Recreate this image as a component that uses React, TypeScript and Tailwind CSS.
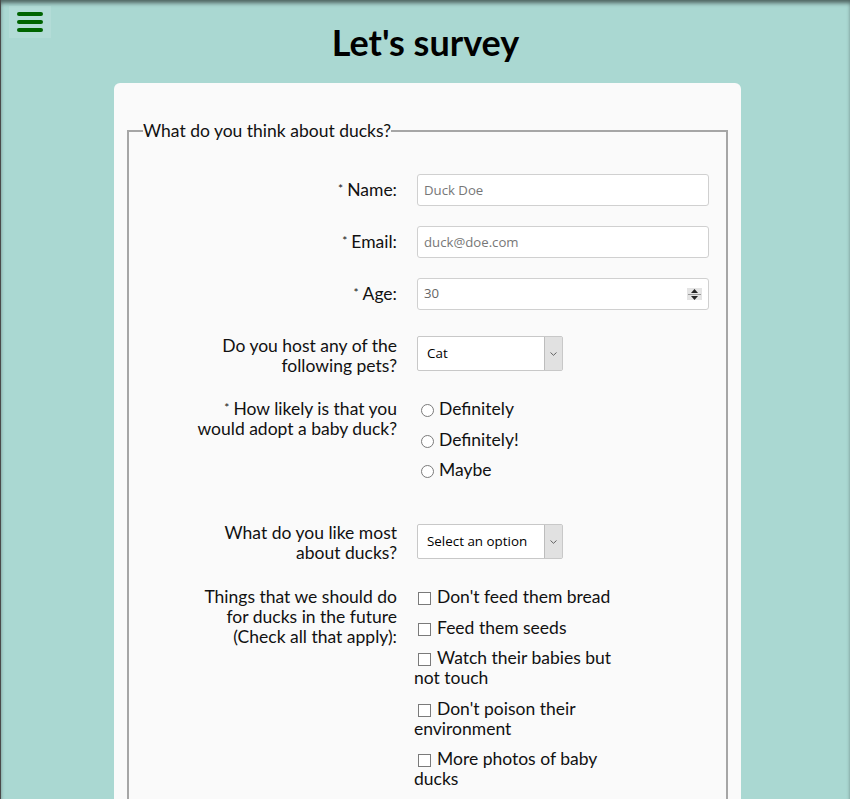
import React from 'react';

const labelFont = "font-['Lato','Open_Sans',sans-serif]";
const inputFont = "font-['Open_Sans','DejaVu_Sans',sans-serif]";

function Req() {
  return <span className="relative -top-[3px] mr-[4px] text-[12px] leading-none">*</span>;
}

function Row({
  label,
  children,
  center = false,
  className = '',
}: {
  label: React.ReactNode;
  children: React.ReactNode;
  center?: boolean;
  className?: string;
}) {
  return (
    <div className={`flex ${center ? 'items-center' : 'items-start'} ${className}`}>
      <div className="w-[254px] shrink-0 text-right leading-5">{label}</div>
      <div className="ml-5">{children}</div>
    </div>
  );
}

function TextInput({ placeholder }: { placeholder: string }) {
  return (
    <input
      type="text"
      placeholder={placeholder}
      className={`h-[32px] w-[292px] rounded-[3px] border border-[#d0d0d0] bg-white px-[6px] text-[13.2px] text-[#333] placeholder:text-[#777] outline-none ${inputFont}`}
    />
  );
}

function NumberInput({ value }: { value: string }) {
  return (
    <div className="flex h-[32px] w-[292px] items-center justify-between rounded-[3px] border border-[#d0d0d0] bg-white pl-[6px] pr-[6px]">
      <span className={`text-[13.2px] text-[#666] ${inputFont}`}>{value}</span>
      <span className="flex h-[12px] w-[15px] flex-col items-center justify-center gap-[1px] bg-[#e4e4e4]">
        <svg width="7" height="4" viewBox="0 0 7 4">
          <path d="M0 4 L3.5 0 L7 4 Z" fill="#222" />
        </svg>
        <span className="h-px w-[13px] bg-[#999]" />
        <svg width="7" height="4" viewBox="0 0 7 4">
          <path d="M0 0 L3.5 4 L7 0 Z" fill="#222" />
        </svg>
      </span>
    </div>
  );
}

function SelectBox({ value }: { value: string }) {
  return (
    <div className="flex h-[35px] w-[146px] rounded-[2px] border border-[#c8c8c8] bg-white">
      <span className={`flex flex-1 items-center pl-[9px] text-[13.4px] text-black ${inputFont}`}>{value}</span>
      <span className="flex w-[18px] items-center justify-center border-l border-[#bdbdbd] bg-[#e1e1e1]">
        <svg width="7" height="4" viewBox="0 0 7 4">
          <path d="M0.5 0.5 L3.5 3.3 L6.5 0.5" fill="none" stroke="#555" strokeWidth="0.9" />
        </svg>
      </span>
    </div>
  );
}

function Radio({ label }: { label: string }) {
  return (
    <label className="block leading-5">
      <input
        type="radio"
        name="adopt"
        className="relative top-[1px] mr-[5px] ml-[4px] inline-block h-[13px] w-[13px] appearance-none rounded-full border border-[#7a7a7a] bg-white align-[-1px]"
      />
      {label}
    </label>
  );
}

function Check({ children }: { children: React.ReactNode }) {
  return (
    <label className="block leading-5">
      <input
        type="checkbox"
        className="relative top-[1px] mr-[6px] ml-[4px] inline-block h-[13px] w-[13px] appearance-none border border-[#7a7a7a] bg-white align-[-1px]"
      />
      {children}
    </label>
  );
}

export default function App() {
  return (
    <div className="relative min-h-screen border-l border-[#4a4a4a] bg-[#aad8d2] shadow-[inset_0_4px_4px_-1px_rgba(0,0,0,0.55)]">
      <button
        type="button"
        className="absolute left-[8px] top-[6px] flex h-[32px] w-[42px] flex-col items-center justify-center gap-[4px] bg-white/10"
        aria-label="Menu"
      >
        <span className="h-[4px] w-[26px] rounded-full bg-[#006400]" />
        <span className="h-[4px] w-[26px] rounded-full bg-[#006400]" />
        <span className="h-[4px] w-[26px] rounded-full bg-[#006400]" />
      </button>

      <h1 className={`pt-[22px] pb-[21px] text-center text-[36px] font-bold leading-[40px] text-black ${labelFont}`}>
        Let's survey
      </h1>

      <div className={`mx-auto w-[627px] translate-x-[2px] rounded-[6px] bg-[#fafafa] px-[13px] pt-[38px] pb-10 text-[17.5px] text-[#111] ${labelFont}`}>
        <fieldset className="border-2 border-solid border-[#a6a6a6] px-[14px] pb-10">
          <legend className="px-0 leading-5">What do you think about ducks?</legend>

          <div className="mt-[33px] flex flex-col">
            <Row center label={<><Req />Name:</>}>
              <TextInput placeholder="Duck Doe" />
            </Row>
            <Row center className="mt-5" label={<><Req />Email:</>}>
              <TextInput placeholder="duck@doe.com" />
            </Row>
            <Row center className="mt-5" label={<><Req />Age:</>}>
              <NumberInput value="30" />
            </Row>
            <Row
              className="mt-[26px]"
              label={<>Do you host any of the<br />following pets?</>}
            >
              <SelectBox value="Cat" />
            </Row>
            <Row
              className="mt-[23px]"
              label={<><Req />How likely is that you<br />would adopt a baby duck?</>}
            >
              <div className="flex flex-col gap-[10.5px]">
                <Radio label="Definitely" />
                <Radio label="Definitely!" />
                <Radio label="Maybe" />
              </div>
            </Row>
            <Row
              className="mt-[43px]"
              label={<>What do you like most<br />about ducks?</>}
            >
              <div className="mt-px">
                <SelectBox value="Select an option" />
              </div>
            </Row>
            <Row
              className="mt-[24px]"
              label={<>Things that we should do<br />for ducks in the future<br />(Check all that apply):</>}
            >
              <div className="-ml-[3px] flex w-[200px] flex-col gap-[10.5px]">
                <Check>Don't feed them bread</Check>
                <Check>Feed them seeds</Check>
                <Check>Watch their babies but<br />not touch</Check>
                <Check>Don't poison their<br />environment</Check>
                <Check>More photos of baby<br />ducks</Check>
              </div>
            </Row>
            <div className="h-24" />
          </div>
        </fieldset>
      </div>
    </div>
  );
}
